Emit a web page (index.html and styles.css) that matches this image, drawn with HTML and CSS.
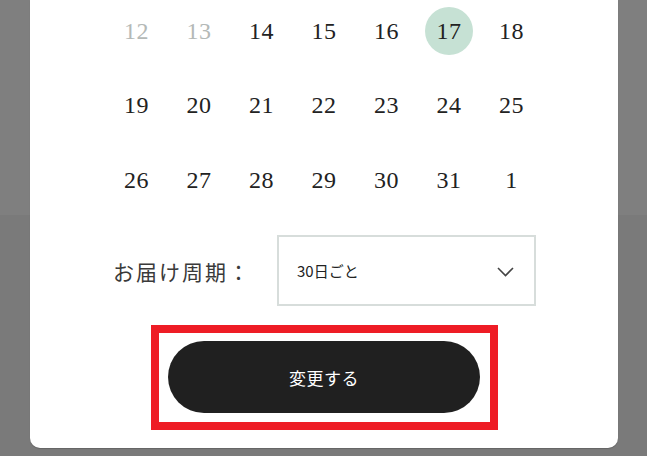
FILE: index.html
```html
<!DOCTYPE html>
<html lang="ja">
<head>
<meta charset="utf-8">
<title>お届け日変更</title>
<link rel="stylesheet" href="styles.css">
</head>
<body>
<div class="modal">
  <div class="calendar">
    <span class="day past">12</span>
    <span class="day past">13</span>
    <span class="day">14</span>
    <span class="day">15</span>
    <span class="day">16</span>
    <span class="day selected">17</span>
    <span class="day">18</span>
    <span class="day">19</span>
    <span class="day">20</span>
    <span class="day">21</span>
    <span class="day">22</span>
    <span class="day">23</span>
    <span class="day">24</span>
    <span class="day">25</span>
    <span class="day">26</span>
    <span class="day">27</span>
    <span class="day">28</span>
    <span class="day">29</span>
    <span class="day">30</span>
    <span class="day">31</span>
    <span class="day">1</span>
  </div>
  <div class="cycle-row">
    <span class="cycle-label">お届け周期：</span>
    <div class="select">
      <span class="select-value">30日ごと</span>
      <svg class="chevron" width="17" height="10" viewBox="0 0 17 10"><path d="M1 1 L8.5 8.5 L16 1" fill="none" stroke="#444" stroke-width="1.6"/></svg>
    </div>
  </div>
  <div class="highlight">
    <button class="submit">変更する</button>
  </div>
</div>
</body>
</html>
```
FILE: styles.css
```css
html, body {
  margin: 0;
  padding: 0;
}
body {
  width: 647px;
  height: 456px;
  overflow: hidden;
  background: linear-gradient(#7f7f7f 0, #7f7f7f 215px, #7a7a7a 215px, #7a7a7a 100%);
  font-family: "Noto Sans CJK JP", "Noto Sans", sans-serif;
}
.modal {
  margin-left: 30px;
  width: 588px;
  height: 448px;
  box-sizing: border-box;
  padding-top: 7px;
  background: #fff;
  border-radius: 0 0 10px 10px;
  box-shadow: 0 1px 1px rgba(0, 0, 0, 0.18);
  display: flex;
  flex-direction: column;
  align-items: center;
}
.calendar {
  display: grid;
  grid-template-columns: repeat(7, 62.5px);
  grid-auto-rows: 48px;
  row-gap: 26.5px;
  margin-bottom: 1px;
}
.day {
  justify-self: center;
  width: 48px;
  height: 48px;
  border-radius: 50%;
  display: flex;
  align-items: center;
  justify-content: center;
  font-family: "Liberation Serif", "DejaVu Serif", serif;
  font-size: 24px;
  letter-spacing: 0.5px;
  color: #222;
}
.day.past {
  color: #b4b9b7;
}
.day.selected {
  background: #c6e1d4;
}
.cycle-row {
  margin-top: 30px;
  display: flex;
  align-items: center;
  gap: 26px;
  margin-left: 1px;
}
.cycle-label {
  font-size: 21px;
  letter-spacing: 2px;
  color: #3a3a3a;
}
.select {
  width: 259px;
  height: 71px;
  box-sizing: border-box;
  border: 2px solid #d7dddb;
  display: flex;
  align-items: center;
  justify-content: space-between;
  padding: 0 20px 0 18px;
}
.select-value {
  font-size: 15px;
  color: #222;
}
.chevron {
  display: block;
  margin-top: 2px;
}
.highlight {
  margin-top: 19px;
  margin-left: 1px;
  border: 8px solid #ee1c25;
  padding: 8px 10px 9px 9px;
}
.submit {
  display: block;
  width: 312px;
  height: 72px;
  border: none;
  border-radius: 36px;
  background: #202020;
  color: #fff;
  font-family: "Noto Sans CJK JP", "Noto Sans", sans-serif;
  font-size: 17px;
  font-weight: 400;
  letter-spacing: 0.5px;
  padding: 0;
}
```
